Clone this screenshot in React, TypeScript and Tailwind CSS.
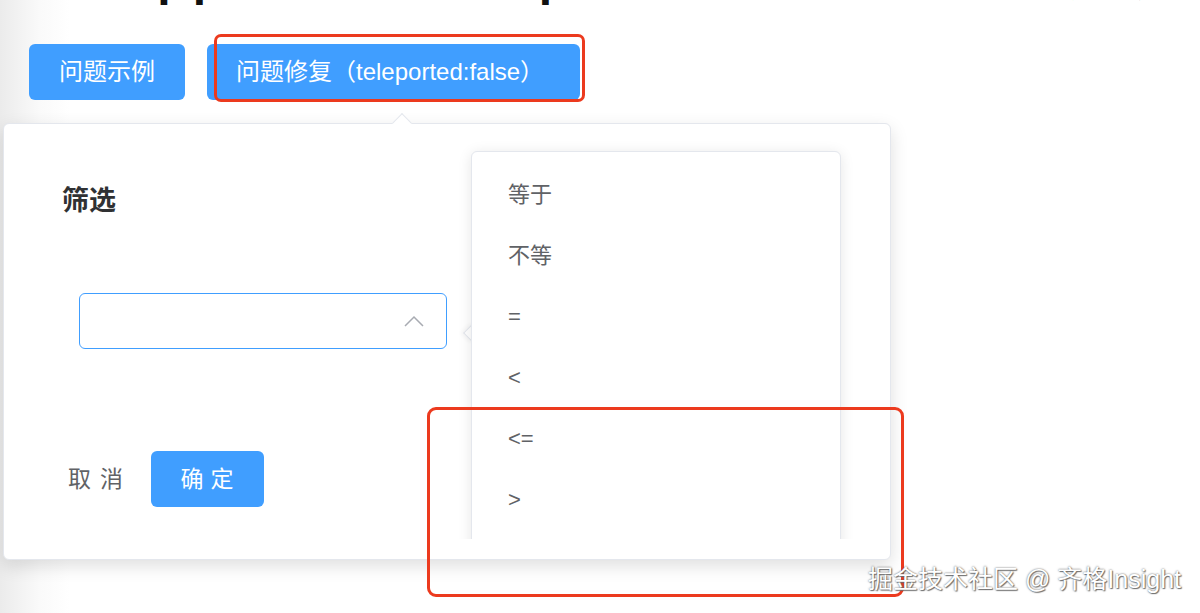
const options = ["等于", "不等", "=", "<", "<=", ">"];

const font = "font-['Liberation_Sans','Noto_Sans_CJK_SC',sans-serif]";

export default function App() {
  return (
    <div
      className={`relative w-[1200px] h-[613px] overflow-hidden bg-[linear-gradient(to_right,#ebebeb,#fafafa_40px,#ffffff_70px)] ${font}`}
    >
      {/* title, cut off at the top of the shot */}
      <h1 className="pl-[84px] -mt-[49px] text-[48px] leading-[56px] font-semibold text-[#111] whitespace-nowrap tracking-[6px]">
        Popper 组件 teleported 属性导致下拉选项被遮挡问题
      </h1>

      <div className="mt-[37px] pl-[29px] flex gap-[22px]">
        <button className="w-[156px] h-[56px] rounded-[6px] bg-[#409eff] text-white text-[24px]">
          问题示例
        </button>
        <button className="w-[373px] h-[56px] rounded-[6px] bg-[#409eff] text-white text-[24px] text-left pl-[29px]">
          问题修复（teleported:false）
        </button>
      </div>

      {/* popover */}
      <div className="relative ml-[3px] mt-[23px] w-[888px] h-[437px] rounded-[6px] border border-[#e4e7ed] bg-white shadow-[0_6px_18px_rgba(0,0,0,0.13)]">
        <div className="absolute -top-[8px] left-[391px] w-[14px] h-[14px] rotate-45 bg-white border-l border-t border-[#e4e7ed]" />

        <div className="flex flex-col items-start pl-[58px] pt-[57px]">
          <div className="text-[27px] font-bold text-[#303133] leading-[40px]">筛选</div>
          <div className="mt-[72px] ml-[17px] w-[368px] h-[56px] rounded-[6px] border border-[#409eff] bg-white flex items-center justify-end pr-[22px]">
            <svg width="20" height="12" viewBox="0 0 20 12" fill="none">
              <polyline points="1,11 10,2 19,11" stroke="#a8abb2" strokeWidth="1.5" />
            </svg>
          </div>
          <div className="mt-[102px] flex items-center gap-[19px]">
            <span className="ml-[6px] text-[23px] tracking-[9px] text-[#606266]">取消</span>
            <button className="w-[113px] h-[56px] rounded-[6px] bg-[#409eff] text-white text-[23px] tracking-[7px] pl-[6px]">
              确定
            </button>
          </div>
        </div>

        {/* select dropdown, clipped by the popover body */}
        <div className="absolute top-[12px] left-[445px] w-[410px] h-[403px] overflow-hidden">
          <div className="absolute top-[190px] left-[17px] w-[14px] h-[14px] rotate-45 bg-white border-l border-b border-[#e4e7ed] shadow-[-2px_2px_4px_rgba(0,0,0,0.04)]" />
          <div className="absolute top-[15px] left-[22px] w-[370px] h-[420px] rounded-[6px] border border-[#e4e7ed] bg-white shadow-[0_2px_14px_rgba(0,0,0,0.1)] pt-[12px] flex flex-col">
            {options.map((o) => (
              <div key={o} className="h-[61px] flex items-center px-[36px] text-[22px] text-[#606266]">
                {o}
              </div>
            ))}
          </div>
        </div>
      </div>

      {/* annotation boxes */}
      <div className="absolute left-[214px] top-[34px] w-[371px] h-[68px] rounded-[7px] border-[3px] border-[#ec3a1e]" />
      <div className="absolute left-[427px] top-[407px] w-[477px] h-[190px] rounded-[9px] border-[3px] border-[#ec3a1e]" />

      <div className="absolute right-[19px] top-[561px] text-[25px] text-white whitespace-nowrap [text-shadow:0_0_2px_#555,1px_1px_1px_#777]">
        掘金技术社区 @ 齐格Insight
      </div>
    </div>
  );
}
